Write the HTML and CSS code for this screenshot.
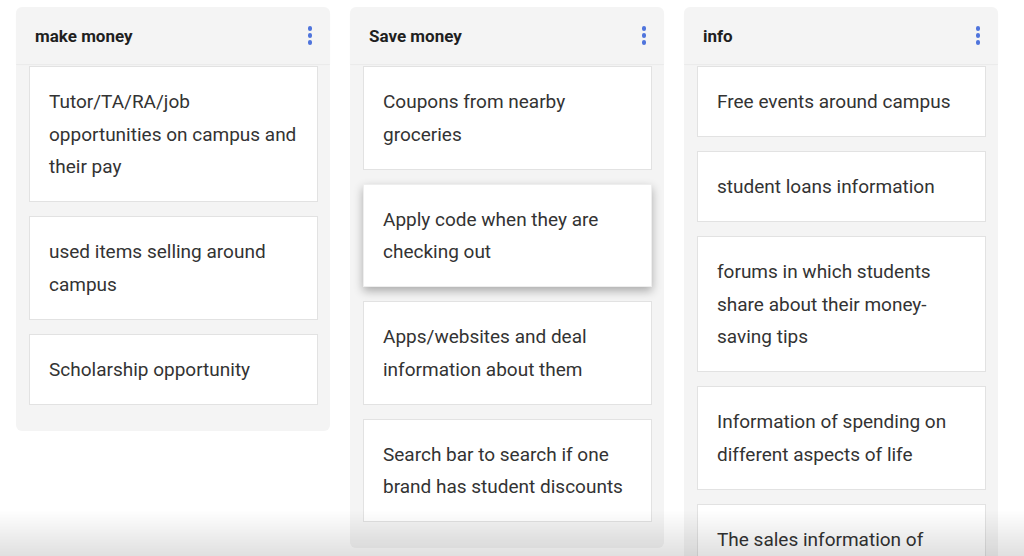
FILE: index.html
```html
<!DOCTYPE html>
<html lang="en">
<head>
    <meta charset="UTF-8">
    <meta name="viewport" content="width=device-width, initial-scale=1.0">
    <title>Student money board</title>
    <link rel="stylesheet" href="styles.css">
</head>
<body>
    <div class="board">
        <div class="column">
            <div class="column-header">
                <h2>make money</h2>
                <span class="kebab"><i></i><i></i><i></i></span>
            </div>
            <div class="column-body">
                <div class="card">Tutor/TA/RA/job opportunities on campus and their pay</div>
                <div class="card">used items selling around campus</div>
                <div class="card">Scholarship opportunity</div>
            </div>
        </div>

        <div class="column">
            <div class="column-header">
                <h2>Save money</h2>
                <span class="kebab"><i></i><i></i><i></i></span>
            </div>
            <div class="column-body">
                <div class="card">Coupons from nearby groceries</div>
                <div class="card lifted">Apply code when they are checking out</div>
                <div class="card">Apps/websites and deal information about them</div>
                <div class="card">Search bar to search if one brand has student discounts</div>
            </div>
        </div>

        <div class="column">
            <div class="column-header">
                <h2>info</h2>
                <span class="kebab"><i></i><i></i><i></i></span>
            </div>
            <div class="column-body">
                <div class="card">Free events around campus</div>
                <div class="card">student loans information</div>
                <div class="card">forums in which students share about their money-saving tips</div>
                <div class="card">Information of spending on different aspects of life</div>
                <div class="card">The sales information of stores near campus</div>
            </div>
        </div>
    </div>

    <div class="fade"></div>
</body>
</html>
```

FILE: styles.css
```css
body {
    font-family: Roboto, 'Liberation Sans', sans-serif;
    background-color: #ffffff;
    color: #333333;
    margin: 0;
    height: 556px;
    overflow: hidden;
}

.board {
    display: flex;
    align-items: flex-start;
    gap: 20px;
    padding: 7px 0 0 16px;
}

.column {
    width: 314px;
    background-color: #f4f4f4;
    border-radius: 6px;
    flex-shrink: 0;
}

.column-header {
    display: flex;
    align-items: center;
    justify-content: space-between;
    height: 57px;
    padding: 0 18px 0 19px;
    border-radius: 6px 6px 0 0;
    box-shadow: 0 1px 1px rgba(0, 0, 0, 0.04);
}

.column-header h2 {
    margin: 0;
    font-size: 17px;
    font-weight: bold;
    color: #1f1f1f;
}

.kebab {
    display: flex;
    flex-direction: column;
    gap: 2.5px;
}

.kebab i {
    width: 4.5px;
    height: 4.5px;
    border-radius: 50%;
    background-color: #4f74dc;
}

.column-body {
    display: flex;
    flex-direction: column;
    gap: 14px;
    padding: 2px 12px 26px 13px;
}

.card {
    background-color: #ffffff;
    border: 1px solid #e2e2e2;
    padding: 19px 19px 17.5px;
    font-size: 19px;
    line-height: 32.5px;
    color: #333333;
}

.lifted {
    box-shadow: 0 4px 9px rgba(0, 0, 0, 0.3);
    border-color: #eeeeee;
}

.fade {
    position: fixed;
    left: 0;
    right: 0;
    bottom: 0;
    height: 46px;
    background: linear-gradient(rgba(0, 0, 0, 0), rgba(0, 0, 0, 0.12));
    pointer-events: none;
}
```
